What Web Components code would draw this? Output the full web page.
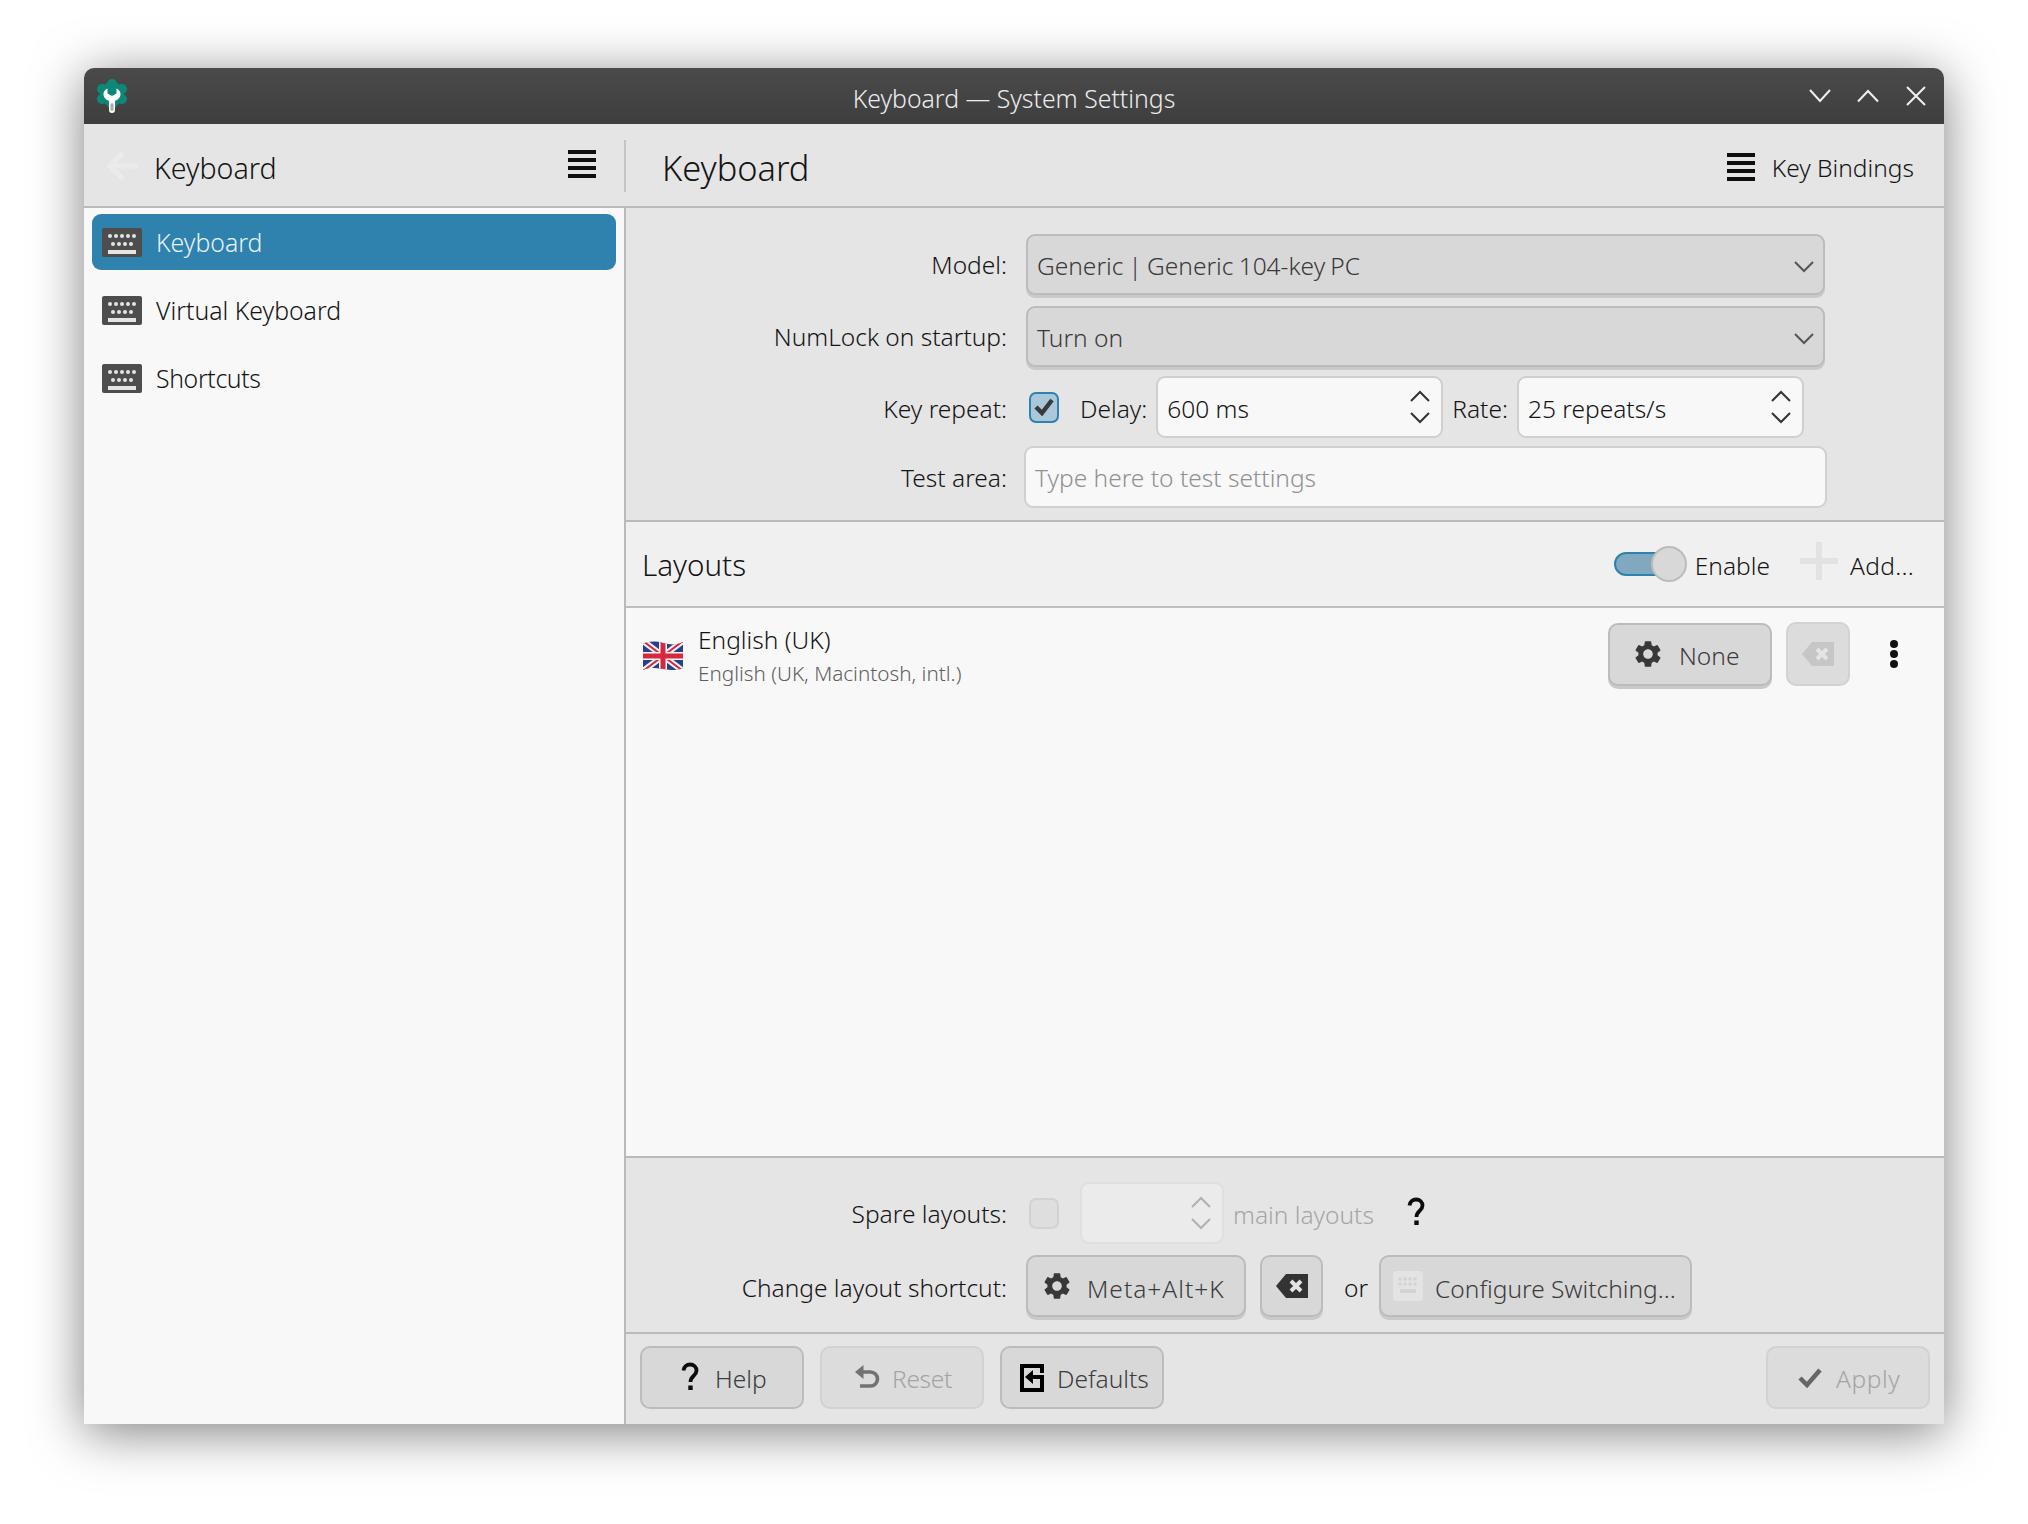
<!DOCTYPE html>
<html><head><meta charset="utf-8"><title>Keyboard — System Settings</title>
<style>
html,body{margin:0;padding:0;background:#fff;width:2028px;height:1524px;overflow:hidden}
body{font-family:"Noto Sans","DejaVu Sans",sans-serif;font-size:24.5px;font-weight:300;color:#141414}
.ic{display:block;flex:none}
</style></head><body>
<kde-window>
  <title-bar slot="title">Keyboard — System Settings</title-bar>
  <side-pane slot="side">
    <list-item selected>Keyboard</list-item>
    <list-item>Virtual Keyboard</list-item>
    <list-item style="letter-spacing:-.35px">Shortcuts</list-item>
  </side-pane>
  <main-pane slot="main">
    <form-panel style="padding:26px 0 12px">
      <form-row label="Model:"><combo-box style="width:799px;margin-left:2px;word-spacing:-1.2px">Generic | Generic 104-key PC</combo-box></form-row>
      <form-row label="NumLock on startup:" style="margin-top:11px"><combo-box style="width:799px;margin-left:2px">Turn on</combo-box></form-row>
      <form-row label="Key repeat:" style="margin-top:9px;--ly:1px">
        <check-box checked style="margin-left:5px;margin-right:21px"></check-box>
        <row-text>Delay:</row-text>
        <spin-box style="width:287px;margin:0 9px">600 ms</spin-box>
        <row-text>Rate:</row-text>
        <spin-box style="width:287px;margin-left:9px">25 repeats/s</spin-box>
      </form-row>
      <form-row label="Test area:" style="margin-top:8px"><text-field placeholder="Type here to test settings"></text-field></form-row>
    </form-panel>
    <layouts-bar></layouts-bar>
    <layout-list></layout-list>
    <form-panel style="padding:24px 0 15px;border-top:2px solid #bababa">
      <form-row label="Spare layouts:">
        <check-box disabled style="margin-left:5px;margin-right:21px"></check-box>
        <spin-box disabled style="width:144px;margin-right:9px"></spin-box>
        <row-text style="color:#a6a6a6">main layouts</row-text>
        <help-mark style="margin-left:32px;margin-top:6px"></help-mark>
      </form-row>
      <form-row label="Change layout shortcut:" style="margin-top:11px;--ly:1px">
        <push-button raised icon="gear" style="width:220px;margin-left:2px;--pl:13px;--g:14px;--ty:2px;letter-spacing:1px">Meta+Alt+K</push-button>
        <push-button raised icon="clear" style="width:63px;margin-left:14px;--pl:14px"></push-button>
        <row-text style="margin:0 11px 0 21px">or</row-text>
        <push-button raised icon="kbd-off" style="width:313px;--pl:12px;--g:12px;--ty:2px">Configure Switching...</push-button>
      </form-row>
    </form-panel>
    <footer-bar></footer-bar>
  </main-pane>
</kde-window>

<script>
const ICONS={
 gear:'<svg class="ic" width="32" height="32" viewBox="0 0 24 24"><path fill="#383838" d="M19.14 12.94c.04-.3.06-.61.06-.94 0-.32-.02-.64-.07-.94l2.03-1.58a.49.49 0 0 0 .12-.61l-1.92-3.32a.488.488 0 0 0-.59-.22l-2.39.96c-.5-.38-1.03-.7-1.62-.94l-.36-2.54a.484.484 0 0 0-.48-.41h-3.84c-.24 0-.43.17-.47.41l-.36 2.54c-.59.24-1.13.57-1.62.94l-2.39-.96c-.22-.08-.47 0-.59.22L2.74 8.87c-.12.21-.08.47.12.61l2.03 1.58c-.05.3-.09.63-.09.94s.02.64.07.94l-2.03 1.58a.49.49 0 0 0-.12.61l1.92 3.32c.12.22.37.29.59.22l2.39-.96c.5.38 1.03.7 1.62.94l.36 2.54c.05.24.24.41.48.41h3.84c.24 0 .44-.17.47-.41l.36-2.54c.59-.24 1.13-.56 1.62-.94l2.39.96c.22.08.47 0 .59-.22l1.92-3.32c.12-.22.07-.47-.12-.61l-2.01-1.58zM12 15.6c-1.98 0-3.6-1.62-3.6-3.6s1.62-3.6 3.6-3.6 3.6 1.62 3.6 3.6-1.62 3.6-3.6 3.6z"/></svg>',
 clear:'<svg class="ic" width="32" height="24" viewBox="0 0 32 24"><path fill="#333" d="M0 12 10 0H32V24H10Z"/><path stroke="#e4e4e4" stroke-width="4" d="M15 7l10 10M25 7 15 17"/></svg>',
 clearoff:'<svg class="ic" width="32" height="24" viewBox="0 0 32 24"><path fill="#c6c6c6" d="M0 12 10 0H32V24H10Z"/><path stroke="#e4e4e4" stroke-width="4" d="M15 7l10 10M25 7 15 17"/></svg>',
 'kbd-off':'<svg class="ic" width="30" height="30" viewBox="0 0 30 30"><rect width="30" height="30" rx="3" fill="#e3e3e3"/><g fill="#d3d3d3"><circle cx="7" cy="8" r="1.700"/><circle cx="12" cy="8" r="1.700"/><circle cx="17" cy="8" r="1.700"/><circle cx="22" cy="8" r="1.700"/><circle cx="7" cy="13" r="1.700"/><circle cx="12" cy="13" r="1.700"/><circle cx="17" cy="13" r="1.700"/><circle cx="22" cy="13" r="1.700"/><rect x="7" y="18" width="16" height="4"/></g></svg>',
 help:'<svg class="ic" width="20" height="32" viewBox="0 0 20 32"><path fill="none" stroke="#0c0c0c" stroke-width="3.800" d="M3.500 8.500C4 4.500 7 2.500 10 2.500c4 0 6.500 2.700 6.500 6 0 5.500-6 5.500-6 11.500"/><rect x="8.300" y="23.500" width="4.400" height="4.500" fill="#0c0c0c"/></svg>',
 reset:'<svg class="ic" width="26" height="26" viewBox="0 0 26 26"><path fill="none" stroke="#727272" stroke-width="3.600" d="M8 7H16.500a7 7 0 0 1 0 14H6"/><path fill="#727272" d="M9.500 0V14L1 7Z"/></svg>',
 defaults:'<svg class="ic" width="24" height="28" viewBox="0 0 24 28"><path fill="none" stroke="#000" stroke-width="4" d="M22 9V2H2V26H22V13H9"/><path fill="#000" d="M5 13 13 6V20Z"/></svg>',
 apply:'<svg class="ic" width="24" height="22" viewBox="0 0 24 22"><path fill="none" stroke="#666" stroke-width="4.500" d="M2 11l7 7L22 3"/></svg>',
 plus:'<svg class="ic" width="38" height="38" viewBox="0 0 38 38"><path fill="#e2e2e2" d="M16 0h6v16h16v6H22v16h-6V22H0v-6h16z"/></svg>',
 burger:'<svg class="ic" width="28" height="28" viewBox="0 0 28 28" style="position:relative;top:1px"><path fill="#0f0f0f" d="M0 0h28v4H0zM0 8h28v4H0zM0 16h28v4H0zM0 24h28v4H0z"/></svg>',
 kbd:'<svg class="ic" width="40" height="29" viewBox="0 0 40 29"><rect width="40" height="29" rx="2" fill="#4d4d4d"/><g fill="#e4e4e4"><circle cx="8" cy="8" r="2"/><circle cx="14" cy="8" r="2"/><circle cx="20" cy="8" r="2"/><circle cx="26" cy="8" r="2"/><circle cx="32" cy="8" r="2"/><circle cx="11" cy="16" r="2"/><circle cx="17" cy="16" r="2"/><circle cx="23" cy="16" r="2"/><circle cx="29" cy="16" r="2"/><rect x="6" y="22" width="28" height="4"/></g></svg>',
 chevDown:'<svg class="ic" width="20" height="12" viewBox="0 0 20 12"><path fill="none" stroke="currentColor" stroke-width="2" d="M1 1l9 9 9-9"/></svg>',
 chevUp:'<svg class="ic" width="20" height="12" viewBox="0 0 20 12"><path fill="none" stroke="currentColor" stroke-width="2" d="M1 11l9-9 9 9"/></svg>'
};
function def(name,css,html){
  customElements.define(name,class extends HTMLElement{
    constructor(){super();this.attachShadow({mode:'open'});}
    connectedCallback(){
      const a=n=>this.getAttribute(n);
      this.shadowRoot.innerHTML='<style>'+css+'</style>'+(typeof html==='function'?html(a,this):html);
    }
  });
}

def('kde-window',`
 :host{display:flex;flex-direction:column;width:1860px;height:1356px;margin:68px 0 0 84px;border-radius:10px 10px 0 0;
  box-shadow:0 8px 52px rgba(0,0,0,.5);background:#e5e5e5}
 .body{flex:1;display:flex;min-height:0}
`,`<slot name="title"></slot><div class="body"><slot name="side"></slot><slot name="main"></slot></div>`);

def('title-bar',`
 :host{display:grid;grid-template-columns:1fr auto 1fr;align-items:center;height:56px;flex:none;border-radius:10px 10px 0 0;
  background:linear-gradient(#4a4a4a,#3e3e3e);color:#ececec;font-size:24.8px}
 .logo{margin-left:13px;display:block}
 .btns{display:flex;justify-content:flex-end;padding-right:4px}
 .btns div{width:48px;height:56px;display:flex;align-items:center;justify-content:center}
 .t{position:relative;top:2px}
`,()=>`<div><svg class="logo" width="30" height="34" viewBox="0 0 30 34">
   <g fill="#0d8878"><circle cx="15" cy="15" r="12"/><circle cx="15" cy="5" r="5"/><circle cx="15" cy="25" r="5"/><circle cx="5" cy="10" r="5"/><circle cx="25" cy="10" r="5"/><circle cx="5" cy="20" r="5"/><circle cx="25" cy="20" r="5"/></g>
   <path fill="#fff" d="M10.500 9.500C7.500 11 6 13.500 6.500 16c.6 3 2.700 5 5.500 5.800V31a3 3 0 0 0 6 0V21.800c2.800-.8 4.900-2.800 5.500-5.800.5-2.500-1-5-4-6.500v5L15 17l-4.500-2.500z"/>
   <rect x="13.500" y="24" width="3" height="8" rx="1.500" fill="#a9a9a9"/></svg></div>
 <div class="t"><slot></slot></div>
 <div class="btns">
  <div><svg width="22" height="14" viewBox="0 0 22 14"><path fill="none" stroke="#f0f0f0" stroke-width="2" d="M1 1l10 11L21 1"/></svg></div>
  <div><svg width="22" height="14" viewBox="0 0 22 14"><path fill="none" stroke="#f0f0f0" stroke-width="2" d="M1 12.500 11 2l10 10.500"/></svg></div>
  <div><svg width="20" height="20" viewBox="0 0 20 20"><path fill="none" stroke="#f0f0f0" stroke-width="2" d="M1 1l18 18M19 1 1 19"/></svg></div>
 </div>`);

def('side-pane',`
 :host{display:flex;flex-direction:column;width:542px;flex:none}
 .hd{height:80px;padding-top:2px;border-bottom:2px solid #bababa;display:flex;align-items:center;background:#e5e5e5;flex:none}
 .back{margin-left:22px;margin-right:16px}
 .ttl{font-size:28.6px;flex:1;position:relative;top:1px}
 .b{margin-right:28px}
 .sep{width:2px;height:52px;background:#c4c4c4}
 .list{flex:1;background:#f8f8f8;border-right:2px solid #bababa;padding:6px 8px;display:flex;flex-direction:column;gap:12px}
`,()=>`<div class="hd"><svg class="ic back" width="32" height="32" viewBox="0 0 32 32"><path fill="none" stroke="#ebebeb" stroke-width="5" d="M17 3 4 16l13 13M4 16h28"/></svg>
  <span class="ttl">Keyboard</span><span class="b">${ICONS.burger}</span><span class="sep"></span></div>
  <div class="list"><slot></slot></div>`);

def('list-item',`
 :host{display:flex;align-items:center;height:56px;border-radius:9px;padding-left:10px;gap:14px;box-sizing:border-box;flex:none;font-size:24.8px}
 :host([selected]){background:#2f81ae;color:#e4f2fa}
 span{position:relative;top:0}
`,()=>`${ICONS.kbd}<span><slot></slot></span>`);

def('main-pane',`
 :host{display:flex;flex-direction:column;flex:1;min-width:0;background:#e5e5e5}
 .hd{height:80px;padding:2px 30px 0 36px;border-bottom:2px solid #bababa;display:flex;align-items:center;flex:none}
 .ttl{font-size:34.4px;flex:1;position:relative;top:1px}
 .kb{margin-left:17px;position:relative;top:1px}
`,()=>`<div class="hd"><span class="ttl">Keyboard</span>${ICONS.burger}<span class="kb">Key Bindings</span></div><slot></slot>`);

def('form-panel',`:host{display:block;flex:none;background:#e5e5e5}`,`<slot></slot>`);

def('row-text',`:host{display:block;flex:none;position:relative;top:1px}`,`<slot></slot>`);

def('form-row',`
 :host{display:flex;align-items:center}
 .l{width:381px;text-align:right;flex:none;margin-right:17px;white-space:nowrap;position:relative;top:var(--ly,0)}
`,a=>`<span class="l">${a('label')}</span><slot></slot>`);

def('combo-box',`
 :host{display:flex;align-items:center;justify-content:space-between;height:61px;box-sizing:border-box;background:#d8d8d8;
  border:2px solid #bcbcbc;border-radius:9px;padding:0 9px 0 9px;color:#3a3a3a;box-shadow:0 3px 0 #c9c9c9}
 .x{position:relative;top:1px}
 .c{color:#555;position:relative;top:-1px}
`,()=>`<span class="x"><slot></slot></span><span class="c">${ICONS.chevDown}</span>`);

def('spin-box',`
 :host{display:flex;align-items:center;justify-content:space-between;height:62px;box-sizing:border-box;background:#f8f8f8;
  border:2px solid #cfcfcf;border-radius:9px;padding:0 11px 0 9px;color:#141414;flex:none}
 :host([disabled]){background:#ebebeb;border-color:#dfdfdf}
 .x{position:relative;top:1px}
 .ar{display:flex;flex-direction:column;gap:10px;color:#333}
 :host([disabled]) .ar{color:#b0b0b0}
`,()=>`<span class="x"><slot></slot></span><span class="ar">${ICONS.chevUp}${ICONS.chevDown}</span>`);

def('text-field',`
 :host{display:flex;align-items:center;width:803px;height:62px;box-sizing:border-box;background:#f8f8f8;border:2px solid #d0d0d0;border-radius:9px;padding:0 9px;color:#919191}
`,a=>`<span>${a('placeholder')}</span>`);

def('check-box',`
 :host{display:flex;align-items:center;justify-content:center;width:30px;height:31px;box-sizing:border-box;flex:none;border-radius:7px;border:2px solid #2f81ae;background:#a9c8da}
 :host([disabled]){background:#dedede;border-color:#d2d2d2}
`,a=>a('checked')!==null?`<svg width="20" height="18" viewBox="0 0 20 18"><path fill="none" stroke="#3a3a3a" stroke-width="4.400" d="M2 9l6 6L18 2"/></svg>`:'');

def('help-mark',`:host{display:block;flex:none}`,()=>ICONS.help);

def('push-button',`
 :host{display:flex;align-items:center;box-sizing:border-box;height:63px;flex:none;padding-left:var(--pl,20px);gap:var(--g,12px);
  background:#d8d8d8;border:2px solid #bcbcbc;border-radius:10px;color:#3c3c3c}
 :host([raised]){box-shadow:0 3px 0 #c9c9c9;height:62px}
 :host([disabled]){background:#dcdcdc;border-color:#d2d2d2;color:#a4a4a4;box-shadow:none}
 span{position:relative;top:var(--ty,1px)}
`,(a)=>`${ICONS[a('icon')]||''}<span><slot></slot></span>`);

def('layouts-bar',`
 :host{display:flex;align-items:center;height:84px;flex:none;background:#f0f0f0;border-top:2px solid #bababa;border-bottom:2px solid #bebebe;padding:0 30px 0 16px}
 .t{font-size:29.6px;flex:1}
 .sw{position:relative;width:73px;height:36px;margin-right:8px}
 .tr{position:absolute;left:0;top:6px;width:48px;height:24px;box-sizing:border-box;border:2px solid #2f81ae;border-radius:12px 0 0 12px;background:#80a9c0}
 .kn{position:absolute;left:37px;top:0;width:36px;height:36px;box-sizing:border-box;border-radius:50%;background:#d8d8d8;border:2px solid #bcbcbc}
 .p{margin:0 12px 0 30px}
 .add{letter-spacing:.3px}
 .en{position:relative;top:1px}
`,()=>`<span class="t">Layouts</span><div class="sw"><div class="tr"></div><div class="kn"></div></div><span class="en">Enable</span><span class="p">${ICONS.plus}</span><span class="add en">Add...</span>`);

def('layout-list',`
 :host{display:block;flex:1;background:#f8f8f8;min-height:0}
 .row{display:flex;align-items:center;padding:14px 0 0 17px;height:64px}
 .fl{margin-right:15px;flex:none;position:relative;top:2px}
 .tx{flex:1;display:flex;flex-direction:column}
 .a{line-height:34px;position:relative;top:0}
 .b{font-size:20.7px;color:#5f5f5f;line-height:28px;position:relative;top:2px}
 push-button{margin-right:14px}
 .dots{width:16px;margin:0 42px 0 22px;display:flex;flex-direction:column;align-items:center;gap:2px}
 .dots i{width:8px;height:8px;border-radius:50%;background:#111;display:block}
`,()=>`<div class="row">
  <svg class="fl" width="40" height="30" viewBox="0 0 40 30" style="filter:blur(.5px)">
   <defs><clipPath id="w"><path d="M0 3C6 0 12 0 20 2S34 4 40 1V27C34 30 28 29 20 28S6 26 0 29Z"/></clipPath></defs>
   <g clip-path="url(#w)"><rect width="40" height="30" fill="#24428c"/>
   <path stroke="#f4f4f4" stroke-width="6" d="M0 0l40 30M40 0 0 30"/><path stroke="#d8283f" stroke-width="2" d="M0 0l40 30M40 0 0 30"/>
   <path fill="#f4f4f4" d="M16 0h8v11h16v8H24v11h-8V19H0v-8h16z"/><path fill="#d8283f" d="M17.500 0h5v12.500H40v5H22.500V30h-5V17.500H0v-5h17.500z"/></g></svg>
  <div class="tx"><span class="a">English (UK)</span><span class="b">English (UK, Macintosh, intl.)</span></div>
  <push-button raised icon="gear" style="width:164px;--pl:22px;--g:15px;height:63px">None</push-button>
  <push-button disabled icon="clearoff" style="width:64px;--pl:14px;height:64px"></push-button>
  <div class="dots"><i></i><i></i><i></i></div>
 </div>`);

def('footer-bar',`
 :host{display:flex;align-items:flex-start;flex:none;border-top:2px solid #bababa;background:#e5e5e5;padding:12px 14px 0;box-sizing:border-box;height:92px;gap:16px}
 .sp{flex:1}
`,()=>`<push-button icon="help" style="width:164px;--pl:38px;--g:15px">Help</push-button>
 <push-button disabled icon="reset" style="width:164px;--pl:32px;--g:12px;letter-spacing:-.3px">Reset</push-button>
 <push-button icon="defaults" style="width:164px;--pl:18px;--g:13px">Defaults</push-button>
 <div class="sp"></div>
 <push-button disabled icon="apply" style="width:164px;--pl:30px;--g:14px;letter-spacing:.6px">Apply</push-button>`);
</script>
</body></html>
